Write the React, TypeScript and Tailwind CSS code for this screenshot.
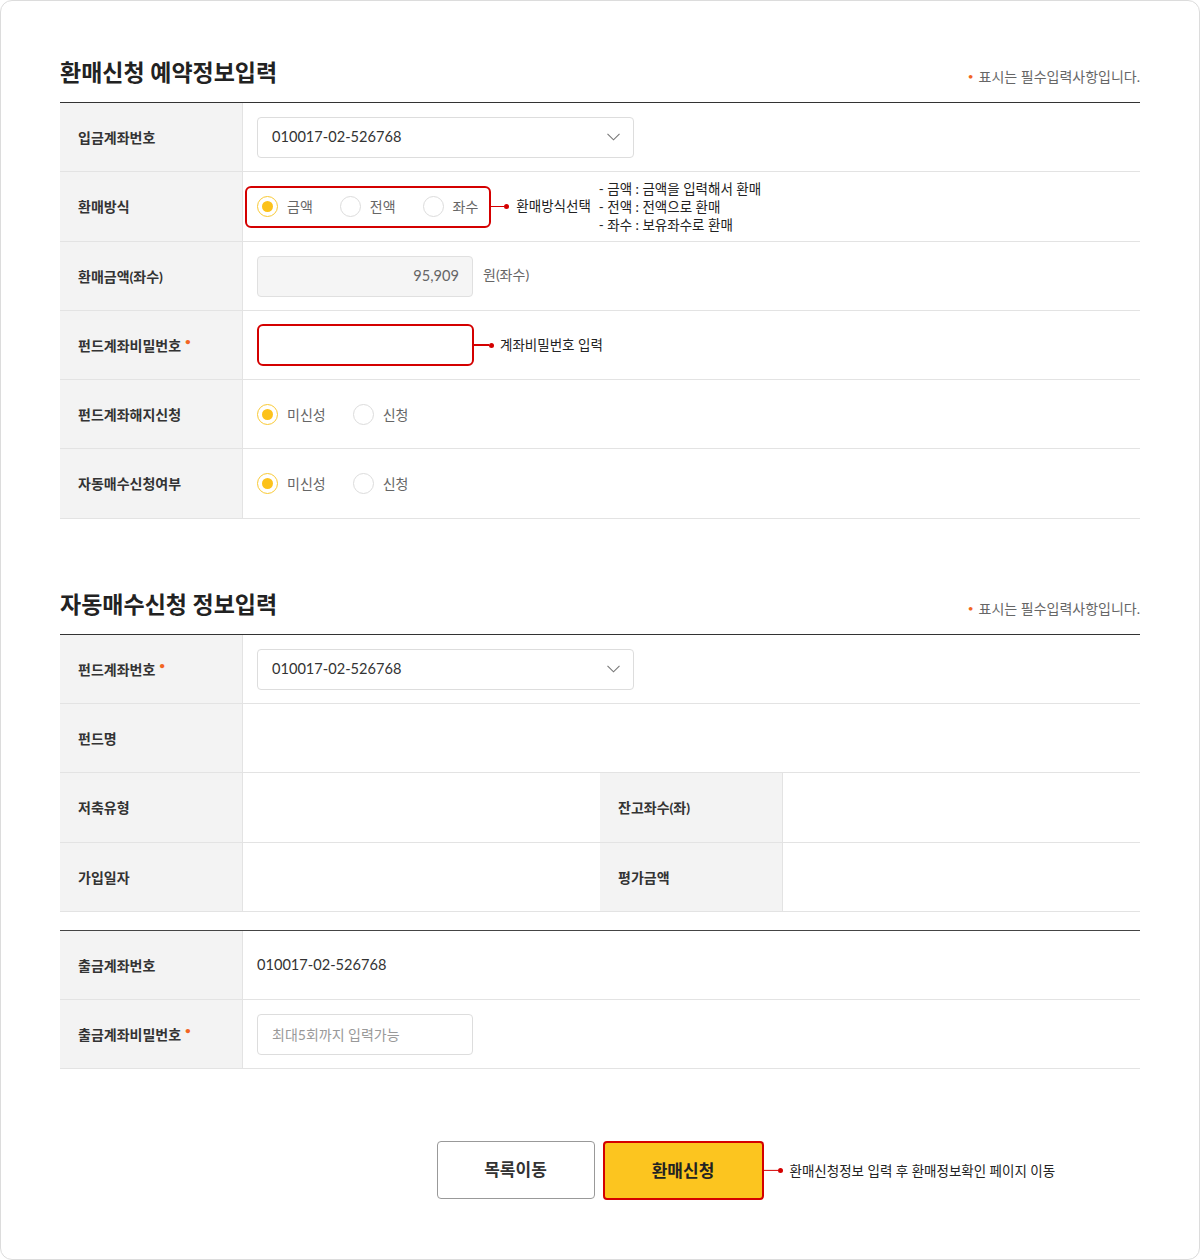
import React from "react";

const FONT = { fontFamily: "Lato, 'Noto Sans CJK KR', sans-serif" };

function Radio({ checked, label, gapClass = "" }: { checked?: boolean; label: string; gapClass?: string }) {
  return (
    <label className={`flex items-center ${gapClass}`}>
      <span
        className={`flex h-[21px] w-[21px] items-center justify-center rounded-full border bg-white ${
          checked ? "border-[#f9c933]" : "border-[#dcdcdc]"
        }`}
      >
        {checked && <span className="h-[11px] w-[11px] rounded-full bg-[#fcc21b]" />}
      </span>
      <span className="ml-[9px] text-[14px] text-[#666]">{label}</span>
    </label>
  );
}

function Chevron() {
  return (
    <svg width="13" height="8" viewBox="0 0 13 8" fill="none">
      <path d="M0.5 0.8 L6.5 6.8 L12.5 0.8" stroke="#777" strokeWidth="1.1" />
    </svg>
  );
}

function Select({ value }: { value: string }) {
  return (
    <div className="flex h-[41px] w-[377px] items-center justify-between rounded-[4px] border border-[#dddddd] bg-white pl-[14px] pr-[13px]">
      <span className="text-[14.6px] text-[#333]">{value}</span>
      <Chevron />
    </div>
  );
}

function Label({ text, req }: { text: string; req?: boolean }) {
  return (
    <div className="flex w-[183px] shrink-0 items-center border-r border-[#e3e3e3] bg-[#f3f3f3] pl-[18px] text-[14px] font-bold text-[#333]">
      {text}
      {req && <span className="ml-[4px] -mt-[8px] text-[10px] text-[#f26522]">•</span>}
    </div>
  );
}

function Row({ label, req, tall, children }: { label: string; req?: boolean; tall?: boolean; children?: React.ReactNode }) {
  return (
    <div className={`flex ${tall ? "h-[70px]" : "h-[69px]"} border-b border-[#e3e3e3]`}>
      <Label text={label} req={req} />
      <div className="flex flex-1 items-center pl-[14px]">{children}</div>
    </div>
  );
}

function Connector({ w }: { w: string }) {
  return (
    <span className="flex items-center">
      <span className={`h-[1.5px] ${w} bg-[#d40000]`} />
      <span className="h-[5px] w-[5px] rounded-full bg-[#d40000]" />
    </span>
  );
}

function Header({ title }: { title: string }) {
  return (
    <div className="flex items-end justify-between border-b border-[#333] pb-[14px]">
      <h2 className="text-[23px] font-bold leading-[32px] text-[#222]">{title}</h2>
      <p className="mb-[1px] flex items-center text-[14px] text-[#666]">
        <span className="mr-[5px] text-[10px] text-[#f26522]">•</span>표시는 필수입력사항입니다.
      </p>
    </div>
  );
}

export default function App() {
  return (
    <div style={FONT} className="h-[1260px] w-[1200px] bg-white">
      <div className="h-full rounded-[12px] border border-[#dcdcdc] px-[59px] pt-[55px]">
        {/* Section 1 */}
        <Header title="환매신청 예약정보입력" />
        <div>
          <Row label="입금계좌번호">
            <Select value="010017-02-526768" />
          </Row>
          <Row label="환매방식" tall>
            <div className="-ml-[12px] flex items-center">
              <div className="flex h-[42px] items-center rounded-[6px] border-2 border-[#d40000] pl-[10px] pr-[11px]">
                <Radio checked label="금액" />
                <Radio label="전액" gapClass="ml-[27px]" />
                <Radio label="좌수" gapClass="ml-[27px]" />
              </div>
              <Connector w="w-[13px]" />
              <span className="ml-[7px] text-[13.5px] text-[#222]">환매방식선택</span>
              <div className="ml-[8px] flex flex-col text-[13.5px] leading-[18px] text-[#222]">
                <span>- 금액 : 금액을 입력해서 환매</span>
                <span>- 전액 : 전액으로 환매</span>
                <span>- 좌수 : 보유좌수로 환매</span>
              </div>
            </div>
          </Row>
          <Row label="환매금액(좌수)">
            <div className="flex h-[41px] w-[216px] items-center justify-end rounded-[4px] border border-[#e0e0e0] bg-[#f5f5f5] pr-[13px] text-[14.6px] text-[#666]">
              95,909
            </div>
            <span className="mb-[4px] ml-[10px] text-[14px] text-[#666]">원(좌수)</span>
          </Row>
          <Row label="펀드계좌비밀번호" req>
            <div className="h-[42px] w-[217px] rounded-[6px] border-2 border-[#d40000] bg-white" />
            <Connector w="w-[15px]" />
            <span className="ml-[6px] text-[13.5px] text-[#222]">계좌비밀번호 입력</span>
          </Row>
          <Row label="펀드계좌해지신청">
            <Radio checked label="미신성" />
            <Radio label="신청" gapClass="ml-[27px]" />
          </Row>
          <Row label="자동매수신청여부" tall>
            <Radio checked label="미신성" />
            <Radio label="신청" gapClass="ml-[27px]" />
          </Row>
        </div>

        {/* Section 2 */}
        <div className="mt-[69px]">
          <Header title="자동매수신청 정보입력" />
          <Row label="펀드계좌번호" req>
            <Select value="010017-02-526768" />
          </Row>
          <Row label="펀드명" />
          <div className="flex h-[70px] border-b border-[#e3e3e3]">
            <Label text="저축유형" />
            <div className="w-[357px]" />
            <Label text="잔고좌수(좌)" />
            <div className="flex-1" />
          </div>
          <div className="flex h-[69px] border-b border-[#e3e3e3]">
            <Label text="가입일자" />
            <div className="w-[357px]" />
            <Label text="평가금액" />
            <div className="flex-1" />
          </div>
        </div>

        {/* Section 3 */}
        <div className="mt-[18px] border-t border-[#444]">
          <Row label="출금계좌번호">
            <span className="text-[14.6px] text-[#333]">010017-02-526768</span>
          </Row>
          <Row label="출금계좌비밀번호" req>
            <div className="flex h-[41px] w-[216px] items-center rounded-[4px] border border-[#dddddd] bg-white pl-[14px] text-[14px] text-[#999]">
              최대5회까지 입력가능
            </div>
          </Row>
        </div>

        {/* Buttons */}
        <div className="mt-[72px] flex justify-center gap-[8px]">
          <button className="h-[58px] w-[158px] rounded-[4px] border border-[#999] bg-white text-[17px] font-bold text-[#333]">
            목록이동
          </button>
          <div className="relative">
            <button className="h-[59px] w-[161px] rounded-[4px] border-2 border-[#d40000] bg-[#fcc51f] text-[17px] font-bold text-[#222]">
              환매신청
            </button>
            <div className="absolute left-full top-1/2 flex -translate-y-1/2 items-center whitespace-nowrap">
              <Connector w="w-[14px]" />
              <span className="ml-[7px] text-[13.5px] text-[#222]">환매신청정보 입력 후 환매정보확인 페이지 이동</span>
            </div>
          </div>
        </div>
      </div>
    </div>
  );
}
